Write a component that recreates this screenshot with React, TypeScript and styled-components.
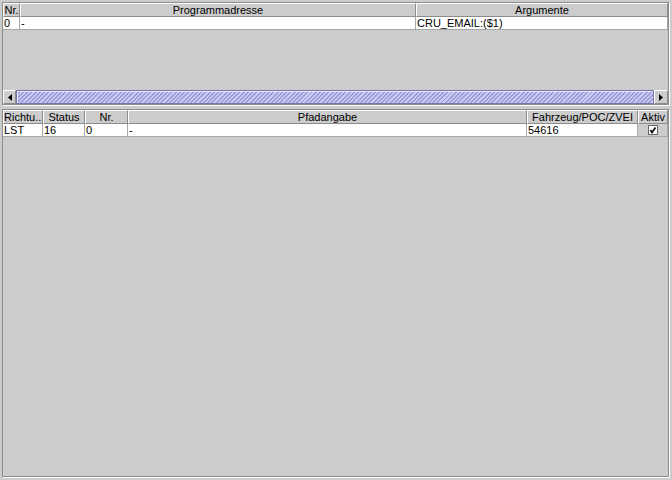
import React from "react";
import styled, { createGlobalStyle } from "styled-components";

const Global = createGlobalStyle`
  html, body { margin: 0; padding: 0; background: #cccccc; }
  body { font-family: "Liberation Sans", Arial, sans-serif; }
`;

const Root = styled.div`
  width: 672px;
  height: 480px;
  box-sizing: border-box;
  padding: 2px 0 0 2px;
  display: flex;
  flex-direction: column;
  gap: 4px;
  background: #cccccc;
  font-family: "Liberation Sans", Arial, sans-serif;
  font-size: 11px;
  color: #000;
  overflow: hidden;
`;

const Pane = styled.div<{ $h: number }>`
  width: 667px;
  height: ${(p) => p.$h}px;
  box-sizing: border-box;
  border: 1px solid #8c8c8c;
  box-shadow: 1px 1px 0 #ffffff;
  background: #cccccc;
  display: flex;
  flex-direction: column;
`;

const Viewport = styled.div`
  flex: 1;
  display: flex;
  flex-direction: column;
  overflow: hidden;
`;

const Grid = styled.div<{ $cols: string }>`
  display: grid;
  grid-template-columns: ${(p) => p.$cols};
`;

const HeadCell = styled.div`
  height: 14px;
  box-sizing: border-box;
  border-top: 1px solid #ffffff;
  border-left: 1px solid #ffffff;
  border-right: 1px solid #8c8c8c;
  border-bottom: 1px solid #8c8c8c;
  background: #cccccc;
  text-align: center;
  line-height: 12px;
  white-space: nowrap;
  overflow: hidden;
`;

const Cell = styled.div<{ $gray?: boolean }>`
  height: 13px;
  box-sizing: border-box;
  background: ${(p) => (p.$gray ? "#cccccc" : "#ffffff")};
  border-right: 1px solid #a8a8a8;
  border-bottom: 1px solid #a8a8a8;
  padding-left: 1px;
  line-height: 12px;
  white-space: nowrap;
  overflow: hidden;
  display: flex;
  align-items: center;
  justify-content: ${(p) => (p.$gray ? "center" : "flex-start")};
`;

const ScrollBar = styled.div`
  height: 14px;
  display: flex;
  background: #cccccc;
`;

const ArrowBtn = styled.div<{ $w: number }>`
  width: ${(p) => p.$w}px;
  box-sizing: border-box;
  border-top: 1px solid #ffffff;
  border-left: 1px solid #ffffff;
  border-right: 1px solid #8c8c8c;
  border-bottom: 1px solid #8c8c8c;
  background: #cccccc;
  display: flex;
  align-items: center;
  justify-content: center;
`;

const Thumb = styled.div`
  flex: 1;
  box-sizing: border-box;
  border: 1px solid #7777aa;
  background: repeating-linear-gradient(
    135deg,
    #c8c8f4 0px,
    #c8c8f4 1.6px,
    #9d9dd6 1.6px,
    #9d9dd6 3px
  );
  box-shadow: inset 1px 1px 0 #e6e6ff;
`;

const Arrow = ({ dir }: { dir: "l" | "r" }) => (
  <svg width="4" height="7" viewBox="0 0 4 7">
    {dir === "l" ? (
      <polygon points="4,0 4,7 0,3.5" fill="#000" />
    ) : (
      <polygon points="0,0 0,7 4,3.5" fill="#000" />
    )}
  </svg>
);

const Check = () => (
  <svg width="10" height="10" viewBox="0 0 10 10">
    <rect x="0.5" y="0.5" width="9" height="9" fill="#ffffff" stroke="#666" />
    <path d="M2.5 5 L4 7.5 L7.5 2.5" stroke="#000" strokeWidth="1.6" fill="none" />
  </svg>
);

const topCols = "17px 396px 252px";
const botCols = "40px 42px 43px 399px 111px 30px";

export default function App() {
  return (
    <>
      <Global />
      <Root>
        <Pane $h={103}>
          <Viewport>
            <Grid $cols={topCols}>
              <HeadCell>Nr.</HeadCell>
              <HeadCell>Programmadresse</HeadCell>
              <HeadCell>Argumente</HeadCell>
              <Cell>0</Cell>
              <Cell>-</Cell>
              <Cell>CRU_EMAIL:($1)</Cell>
            </Grid>
          </Viewport>
          <ScrollBar>
            <ArrowBtn $w={13}>
              <Arrow dir="l" />
            </ArrowBtn>
            <Thumb />
            <ArrowBtn $w={14}>
              <Arrow dir="r" />
            </ArrowBtn>
          </ScrollBar>
        </Pane>
        <Pane $h={368}>
          <Viewport>
            <Grid $cols={botCols}>
              <HeadCell>Richtu...</HeadCell>
              <HeadCell>Status</HeadCell>
              <HeadCell>Nr.</HeadCell>
              <HeadCell>Pfadangabe</HeadCell>
              <HeadCell>Fahrzeug/POC/ZVEI</HeadCell>
              <HeadCell>Aktiv</HeadCell>
              <Cell>LST</Cell>
              <Cell>16</Cell>
              <Cell>0</Cell>
              <Cell>-</Cell>
              <Cell>54616</Cell>
              <Cell $gray>
                <Check />
              </Cell>
            </Grid>
          </Viewport>
        </Pane>
      </Root>
    </>
  );
}
